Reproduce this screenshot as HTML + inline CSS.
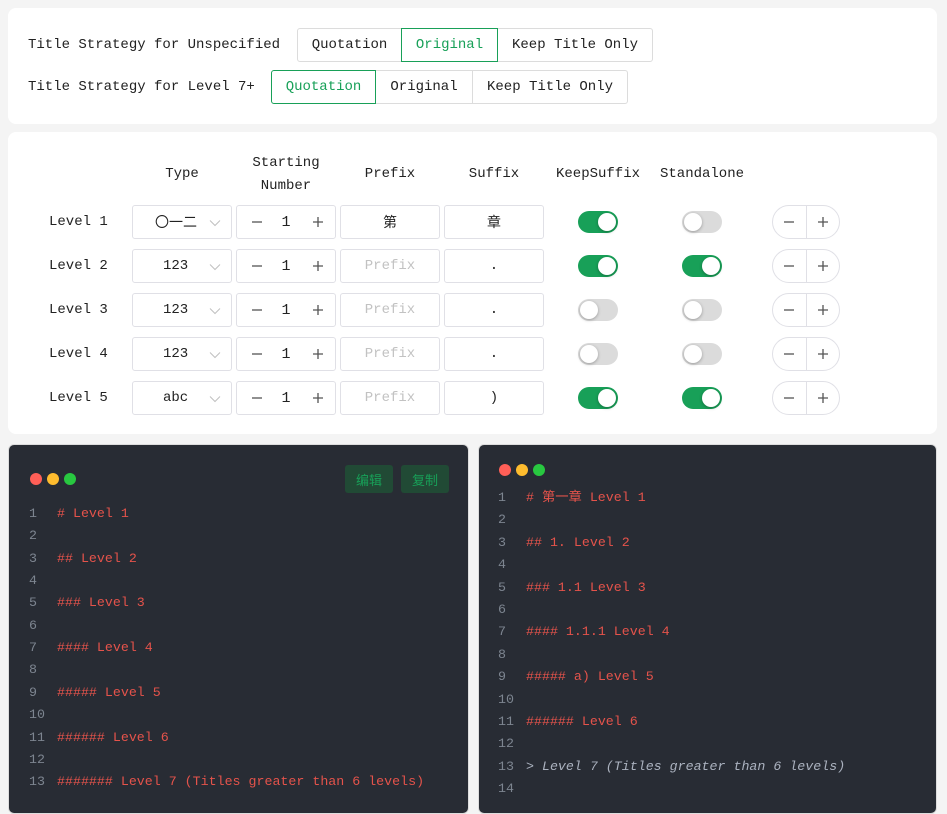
<!DOCTYPE html>
<html><head><meta charset="utf-8"><style>
*{box-sizing:border-box;margin:0;padding:0}
body{width:947px;height:800px;overflow:hidden;background:#f4f4f4;font-family:"Liberation Mono","Noto Sans CJK SC",monospace;font-size:14px;color:#222;position:relative}
.card{position:absolute;background:#fff;border-radius:8px}
.lbl{position:absolute;line-height:20px;white-space:nowrap}
.seg{position:absolute;height:34px;border:1px solid #dcdcdc;display:flex;align-items:center;justify-content:center;background:#fff;white-space:nowrap}
.seg.on{border-color:#18a058;color:#18a058;z-index:2}
.hd{position:absolute;text-align:center;line-height:23px;transform:translateX(-50%);white-space:nowrap}
.box{position:absolute;height:34px;width:100px;border:1px solid #e0e0e6;border-radius:3px;display:flex;align-items:center;justify-content:center;background:#fff}
.ph{color:#c2c2c2}
.tg{position:absolute;width:40px;height:22px;border-radius:11px;background:#dbdbdb}
.tg::after{content:"";position:absolute;top:2px;left:2px;width:18px;height:18px;border-radius:50%;background:#fff;box-shadow:0 1px 3px rgba(0,0,0,.3)}
.tg.on{background:#18a058}
.tg.on::after{left:20px}
.pm{position:absolute;width:68px;height:34px;border:1px solid #e0e0e6;border-radius:17px;background:#fff}
.pm::before{content:"";position:absolute;left:33px;top:0;bottom:0;width:1px;background:#e0e0e6}
.pm svg,.box svg{position:absolute}
.ed{position:absolute;background:#282c34;border-radius:6px;top:444px;height:370px;border:1px solid #ddd}
.dot{position:absolute;width:12px;height:12px;border-radius:50%}
.ln{position:absolute;font-size:13.3px;line-height:20px;white-space:pre}
.n{color:#7d8590}
.r{color:#e5534b}
.btn{position:absolute;top:20px;width:48px;height:28px;background:#214a35;color:#18a058;border-radius:3px;font-size:13px;display:flex;align-items:center;justify-content:center}
</style></head><body>
<div class="card" style="left:8px;top:8px;width:929px;height:116px"></div>
<div class="lbl" style="left:28px;top:35px">Title Strategy for Unspecified</div>
<div class="seg" style="left:297px;top:28px;width:105px;border-radius:3px 0 0 3px">Quotation</div>
<div class="seg on" style="left:401px;top:28px;width:97px">Original</div>
<div class="seg" style="left:497px;top:28px;width:156px;border-radius:0 3px 3px 0">Keep Title Only</div>
<div class="lbl" style="left:28px;top:77px">Title Strategy for Level 7+</div>
<div class="seg on" style="left:271px;top:70px;width:105px;border-radius:3px 0 0 3px">Quotation</div>
<div class="seg" style="left:375px;top:70px;width:98px">Original</div>
<div class="seg" style="left:472px;top:70px;width:156px;border-radius:0 3px 3px 0">Keep Title Only</div>

<div class="card" style="left:8px;top:132px;width:929px;height:302px"></div>
<div class="hd" style="left:182px;top:163px">Type</div>
<div class="hd" style="left:286px;top:152px">Starting<br>Number</div>
<div class="hd" style="left:390px;top:163px">Prefix</div>
<div class="hd" style="left:494px;top:163px">Suffix</div>
<div class="hd" style="left:598px;top:163px">KeepSuffix</div>
<div class="hd" style="left:702px;top:163px">Standalone</div>

<div id="rows"></div>
<script>
var d=[["〇一二","第","章",1,0],["123","","." ,1,1],["123","",".",0,0],["123","",".",0,0],["abc","",")",1,1]];
var M='<svg width="12" height="12" viewBox="0 0 12 12" style="STYLE"><path d="M1 6H11" stroke="#555" stroke-width="1.3"/></svg>';
var P='<svg width="12" height="12" viewBox="0 0 12 12" style="STYLE"><path d="M1 6H11M6 1V11" stroke="#555" stroke-width="1.3"/></svg>';
var C='<svg width="12" height="8" viewBox="0 0 12 8" style="right:10px;top:13px"><path d="M1 1.5L6 6.5L11 1.5" fill="none" stroke="#c0c0c0" stroke-width="1"/></svg>';
var h="";
d.forEach(function(r,i){var y=205+i*44;
h+='<div class="lbl" style="left:49px;top:'+(y+7)+'px">Level '+(i+1)+'</div>';
h+='<div class="box" style="left:132px;top:'+y+'px;justify-content:flex-start;padding-left:'+(i==0?22:30)+'px">'+r[0]+C+'</div>';
h+='<div class="box" style="left:236px;top:'+y+'px;font-size:15px">'+M.replace('STYLE','left:14px;top:10px')+'<span>1</span>'+P.replace('STYLE','left:75px;top:10px')+'</div>';
h+='<div class="box'+(r[1]?'':' ph')+'" style="left:340px;top:'+y+'px">'+(r[1]||'Prefix')+'</div>';
h+='<div class="box" style="left:444px;top:'+y+'px">'+r[2]+'</div>';
h+='<div class="tg'+(r[3]?' on':'')+'" style="left:578px;top:'+(y+6)+'px"></div>';
h+='<div class="tg'+(r[4]?' on':'')+'" style="left:682px;top:'+(y+6)+'px"></div>';
h+='<div class="pm" style="left:772px;top:'+y+'px">'+M.replace('STYLE','left:10px;top:10px')+P.replace('STYLE','left:44px;top:10px')+'</div>';
});
var L=["# Level 1","","## Level 2","","### Level 3","","#### Level 4","","##### Level 5","","###### Level 6","","####### Level 7 (Titles greater than 6 levels)"];
h+='<div class="ed" style="left:8px;width:461px"><div class="dot" style="left:21px;top:28px;background:#ff5f57"></div><div class="dot" style="left:38px;top:28px;background:#febc2e"></div><div class="dot" style="left:55px;top:28px;background:#28c840"></div><div class="btn" style="left:336px">编辑</div><div class="btn" style="left:392px">复制</div></div>';
L.forEach(function(t,i){var y=504+i*22.35;h+='<div class="ln n" style="left:29px;top:'+y+'px">'+(i+1)+'</div><div class="ln r" style="left:57px;top:'+y+'px">'+t+'</div>';});
var R=["# 第一章 Level 1","","## 1. Level 2","","### 1.1 Level 3","","#### 1.1.1 Level 4","","##### a) Level 5","","###### Level 6","","",""];
h+='<div class="ed" style="left:478px;width:459px"><div class="dot" style="left:20px;top:19px;background:#ff5f57"></div><div class="dot" style="left:37px;top:19px;background:#febc2e"></div><div class="dot" style="left:54px;top:19px;background:#28c840"></div></div>';
R.forEach(function(t,i){var y=488+i*22.4;h+='<div class="ln n" style="left:498px;top:'+y+'px">'+(i+1)+'</div>';
if(i==12)h+='<div class="ln" style="left:526px;top:'+y+'px;color:#abb2bf;font-style:italic">&gt; Level 7 (Titles greater than 6 levels)</div>';
else h+='<div class="ln r" style="left:526px;top:'+y+'px">'+t+'</div>';});
document.getElementById("rows").innerHTML=h;
</script>
</body></html>
